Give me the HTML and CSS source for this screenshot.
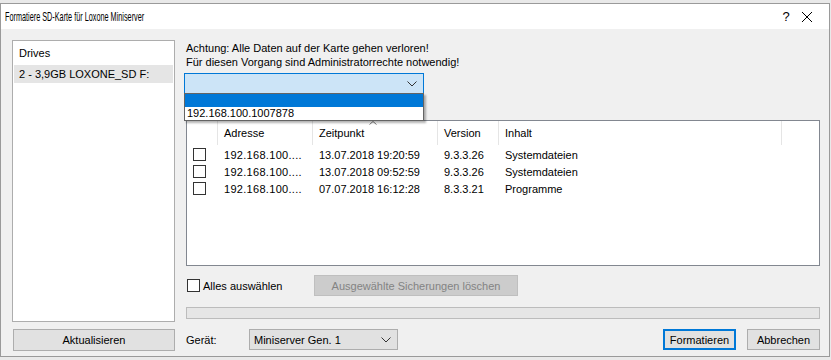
FILE: index.html
```html
<!DOCTYPE html>
<html lang="de">
<head>
<meta charset="utf-8">
<title>Formatiere SD-Karte für Loxone Miniserver</title>
<link rel="stylesheet" href="styles.css">
</head>
<body>
<div class="window">
  <div class="titlebar">
    <span class="title-box"><span class="title">Formatiere SD-Karte für Loxone Miniserver</span></span>
    <span class="help">?</span>
    <span class="close">
      <svg width="12" height="12" viewBox="0 0 12 12"><path d="M1 1 L11 11 M11 1 L1 11" stroke="#000" stroke-width="1" fill="none"/></svg>
    </span>
  </div>
  <div class="content">
    <div class="left">
      <div class="drives">
        <div class="drives-head">Drives</div>
        <div class="drive selected">2 - 3,9GB LOXONE_SD F:</div>
      </div>
      <button class="btn btn-full">Aktualisieren</button>
    </div>
    <div class="right">
      <p class="warn">Achtung: Alle Daten auf der Karte gehen verloren!<br>Für diesen Vorgang sind Administratorrechte notwendig!</p>
      <div class="combo-wrap">
        <div class="combo combo-focus">
          <svg class="chev" width="10" height="6" viewBox="0 0 10 6"><path d="M0.5 0.5 L5 5 L9.5 0.5" stroke="#333" stroke-width="1" fill="none"/></svg>
        </div>
        <ul class="droplist">
          <li class="opt opt-sel">&nbsp;</li>
          <li class="opt">192.168.100.1007878</li>
        </ul>
      </div>
      <div class="listview">
        <div class="lv-head">
          <div class="hcell"></div>
          <div class="hcell">Adresse</div>
          <div class="hcell sorted">Zeitpunkt
            <svg class="sort" width="8" height="4" viewBox="0 0 8 4"><path d="M0.5 3.5 L4 0.5 L7.5 3.5" stroke="#777" stroke-width="1" fill="none"/></svg>
          </div>
          <div class="hcell">Version</div>
          <div class="hcell">Inhalt</div>
          <div class="hcell last"></div>
        </div>
        <div class="lv-row">
          <div class="cell"><span class="check"></span></div>
          <div class="cell addr">192.168.100....</div>
          <div class="cell">13.07.2018 19:20:59</div>
          <div class="cell">9.3.3.26</div>
          <div class="cell">Systemdateien</div>
          <div class="cell"></div>
        </div>
        <div class="lv-row">
          <div class="cell"><span class="check"></span></div>
          <div class="cell addr">192.168.100....</div>
          <div class="cell">13.07.2018 09:52:59</div>
          <div class="cell">9.3.3.26</div>
          <div class="cell">Systemdateien</div>
          <div class="cell"></div>
        </div>
        <div class="lv-row">
          <div class="cell"><span class="check"></span></div>
          <div class="cell addr">192.168.100....</div>
          <div class="cell">07.07.2018 16:12:28</div>
          <div class="cell">8.3.3.21</div>
          <div class="cell">Programme</div>
          <div class="cell"></div>
        </div>
      </div>
      <div class="actions">
        <label class="checkline"><span class="check"></span>Alles auswählen</label>
        <button class="btn btn-disabled" disabled>Ausgewählte Sicherungen löschen</button>
      </div>
      <div class="progress"></div>
      <div class="footer">
        <span class="label">Gerät:</span>
        <div class="combo combo-plain">
          <span>Miniserver Gen. 1</span>
          <svg class="chev" width="10" height="6" viewBox="0 0 10 6"><path d="M0.5 0.5 L5 5 L9.5 0.5" stroke="#333" stroke-width="1" fill="none"/></svg>
        </div>
        <div class="spacer"></div>
        <button class="btn btn-default">Formatieren</button>
        <button class="btn">Abbrechen</button>
      </div>
    </div>
  </div>
</div>
</body>
</html>
```
FILE: styles.css
```css
* { box-sizing: border-box; }
html, body { margin: 0; padding: 0; }
body {
  background: #e9e9e9;
  font-family: "Liberation Sans", Arial, sans-serif;
  font-size: 11px;
  color: #000;
  padding-top: 3px;
  width: 831px;
  height: 360px;
  overflow: hidden;
}
.window {
  width: 830px;
  height: 354px;
  border: 1px solid #9a9a9a;
  background: #f0f0f0;
  display: flex;
  flex-direction: column;
}
.titlebar {
  height: 25px;
  background: #fff;
  display: flex;
  align-items: center;
  padding-left: 4px;
  flex: none;
}
.title-box { flex: 1; }
.title {
  display: inline-block;
  font-family: "Liberation Sans", sans-serif;
  font-size: 13px;
  transform: scaleX(0.56);
  transform-origin: left center;
  white-space: nowrap;
}
.help {
  font-size: 13px;
  width: 20px;
  text-align: center;
  margin-right: 1px;
}
.close {
  width: 20px;
  display: flex;
  justify-content: center;
  margin-right: 12px;
}
.content {
  flex: 1;
  display: flex;
  padding: 11px 9px 5px 11px;
  gap: 11px;
}
.left {
  width: 163px;
  display: flex;
  flex-direction: column;
  gap: 7px;
}
.drives {
  flex: 1;
  background: #fff;
  border: 1px solid #adadad;
  padding: 1px;
}
.drives-head {
  height: 23px;
  line-height: 23px;
  padding-left: 5px;
}
.drive {
  height: 18px;
  line-height: 18px;
  padding-left: 5px;
}
.drive.selected { background: #e5e5e5; }
.btn {
  font-family: inherit;
  font-size: 11px;
  color: #000;
  height: 21px;
  background: #e1e1e1;
  border: 1px solid #adadad;
  padding: 0;
  margin: 0;
}
.btn-full { width: 162px; height: 22px; margin-left: 1px; }
.right {
  flex: 1;
  display: flex;
  flex-direction: column;
}
.warn {
  margin: 0;
  line-height: 14px;
  height: 33px;
  padding-top: 1px;
}
.combo-wrap {
  position: relative;
  margin-left: -2px;
  height: 21px;
}
.combo {
  height: 21px;
  border: 1px solid #adadad;
  background: #e1e1e1;
  display: flex;
  align-items: center;
  padding-left: 4px;
  padding-right: 6px;
}
.combo-focus {
  width: 240px;
  background: #cce4f7;
  border-color: #0078d7;
  justify-content: flex-end;
}
.combo span { flex: 1; }
.chev { display: block; }
.droplist {
  position: absolute;
  left: 0;
  top: 20px;
  width: 240px;
  margin: 0;
  padding: 0;
  list-style: none;
  background: #fff;
  border: 1px solid #646464;
  box-shadow: 2px 2px 2px rgba(0,0,0,0.3);
  z-index: 2;
}
.opt {
  height: 13px;
  line-height: 13px;
  padding-left: 2px;
  font-size: 11px;
}
.opt-sel { background: #0078d7; }
.listview {
  margin-top: 26px;
  height: 146px;
  background: #fff;
  border: 1px solid #828790;
}
.lv-head, .lv-row {
  display: grid;
  grid-template-columns: 31px 95px 125px 61px 283px 1fr;
}
.lv-head { height: 24px; margin-bottom: 2px; }
.hcell {
  border-right: 1px solid #e5e5e5;
  line-height: 24px;
  padding-left: 6px;
  position: relative;
}
.hcell.last { border-right: none; }
.sort { position: absolute; left: 56px; top: 0; }
.lv-row { height: 17px; }
.cell {
  line-height: 17px;
  padding-left: 6px;
  white-space: nowrap;
  overflow: hidden;
}
.cell.addr { letter-spacing: 0.3px; }
.cell:first-child { padding-left: 6px; padding-top: 1px; }
.check {
  display: inline-block;
  width: 13px;
  height: 13px;
  border: 1px solid #333;
  background: #fff;
  vertical-align: top;
}
.actions {
  margin-top: 9px;
  height: 21px;
  display: flex;
  align-items: center;
}
.checkline {
  display: flex;
  align-items: center;
  gap: 3px;
  width: 127px;
  margin-left: 1px;
}
.btn-disabled {
  width: 204px;
  background: #cccccc;
  border-color: #bfbfbf;
  color: #838383;
}
.progress {
  margin-top: 11px;
  height: 12px;
  background: #e6e6e6;
  border: 1px solid #bcbcbc;
}
.footer {
  margin-top: 10px;
  display: flex;
  align-items: center;
  height: 21px;
}
.label { width: 63px; }
.combo-plain { width: 149px; }
.spacer { flex: 1; }
.btn-default {
  width: 73px;
  border: 2px solid #0078d7;
  margin-right: 11px;
}
.footer .btn { width: 73px; }
```
